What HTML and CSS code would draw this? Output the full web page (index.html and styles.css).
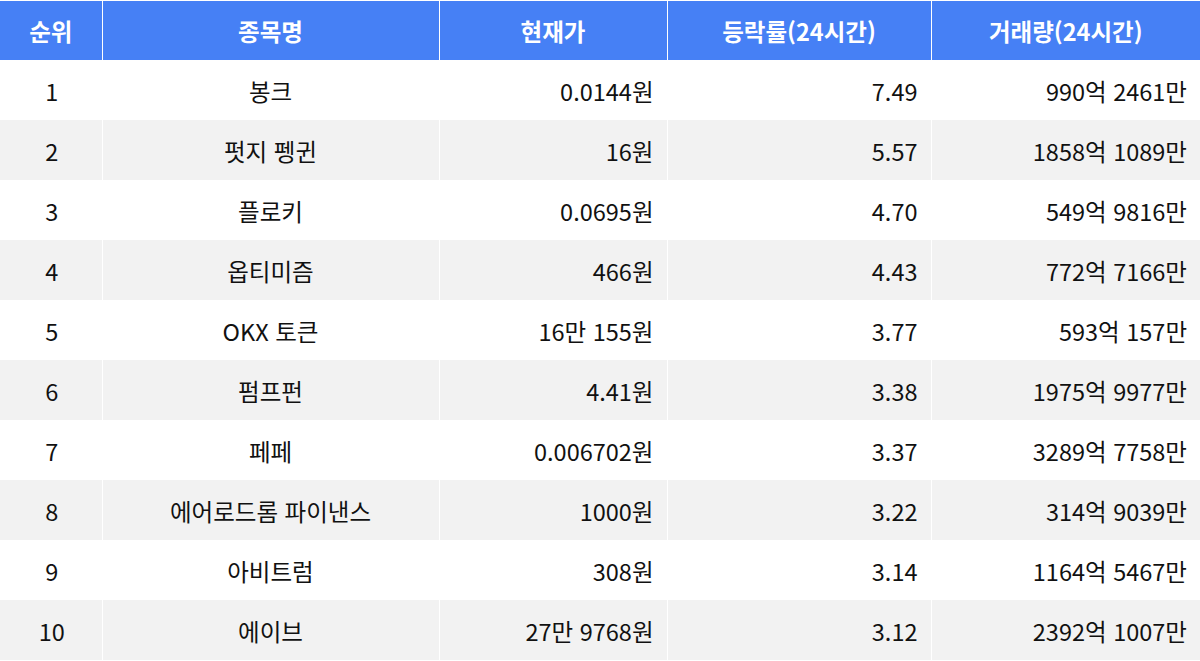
FILE: index.html
```html
<!DOCTYPE html>
<html lang="ko">
<head>
<meta charset="utf-8">
<link rel="stylesheet" href="styles.css">
</head>
<body>
<table class="rank">
  <colgroup>
    <col class="c1"><col class="c2"><col class="c3"><col class="c4"><col class="c5">
  </colgroup>
  <thead>
    <tr><th>순위</th><th>종목명</th><th>현재가</th><th>등락률(24시간)</th><th>거래량(24시간)</th></tr>
  </thead>
  <tbody>
    <tr><td class="ctr">1</td><td class="ctr">봉크</td><td class="num">0.0144원</td><td class="num">7.49</td><td class="num">990억 2461만</td></tr>
    <tr><td class="ctr">2</td><td class="ctr">펏지 펭귄</td><td class="num">16원</td><td class="num">5.57</td><td class="num">1858억 1089만</td></tr>
    <tr><td class="ctr">3</td><td class="ctr">플로키</td><td class="num">0.0695원</td><td class="num">4.70</td><td class="num">549억 9816만</td></tr>
    <tr><td class="ctr">4</td><td class="ctr">옵티미즘</td><td class="num">466원</td><td class="num">4.43</td><td class="num">772억 7166만</td></tr>
    <tr><td class="ctr">5</td><td class="ctr">OKX 토큰</td><td class="num">16만 155원</td><td class="num">3.77</td><td class="num">593억 157만</td></tr>
    <tr><td class="ctr">6</td><td class="ctr">펌프펀</td><td class="num">4.41원</td><td class="num">3.38</td><td class="num">1975억 9977만</td></tr>
    <tr><td class="ctr">7</td><td class="ctr">페페</td><td class="num">0.006702원</td><td class="num">3.37</td><td class="num">3289억 7758만</td></tr>
    <tr><td class="ctr">8</td><td class="ctr">에어로드롬 파이낸스</td><td class="num">1000원</td><td class="num">3.22</td><td class="num">314억 9039만</td></tr>
    <tr><td class="ctr">9</td><td class="ctr">아비트럼</td><td class="num">308원</td><td class="num">3.14</td><td class="num">1164억 5467만</td></tr>
    <tr><td class="ctr">10</td><td class="ctr">에이브</td><td class="num">27만 9768원</td><td class="num">3.12</td><td class="num">2392억 1007만</td></tr>
  </tbody>
</table>
</body>
</html>
```

FILE: styles.css
```css
html, body {
  margin: 0;
  padding: 0;
  background: #ffffff;
}
body {
  font-family: "Noto Sans CJK KR", "Noto Sans", sans-serif;
}
.rank {
  width: 1200px;
  border-collapse: collapse;
  table-layout: fixed;
  border-top: 1px solid #ffffff;
}
.c1 { width: 102px; }
.c2 { width: 337px; }
.c3 { width: 228px; }
.c4 { width: 264px; }
.c5 { width: 269px; }
.rank th {
  background: #4680f5;
  color: #ffffff;
  font-weight: 700;
  font-size: 23.5px;
  height: 59px;
  padding: 0;
  text-align: center;
  border-left: 1px solid #ffffff;
}
.rank th:first-child { border-left: none; }
.rank td {
  height: 60px;
  padding: 1px 13px 0 13px;
  font-size: 23.5px;
  color: #111111;
  border-left: 1px solid #ffffff;
  box-sizing: border-box;
}
.rank td:first-child { border-left: none; padding-left: 15px; }
.rank tbody tr:nth-child(even) td { background: #f2f2f2; }
.ctr { text-align: center; }
.num { text-align: right; }
```
